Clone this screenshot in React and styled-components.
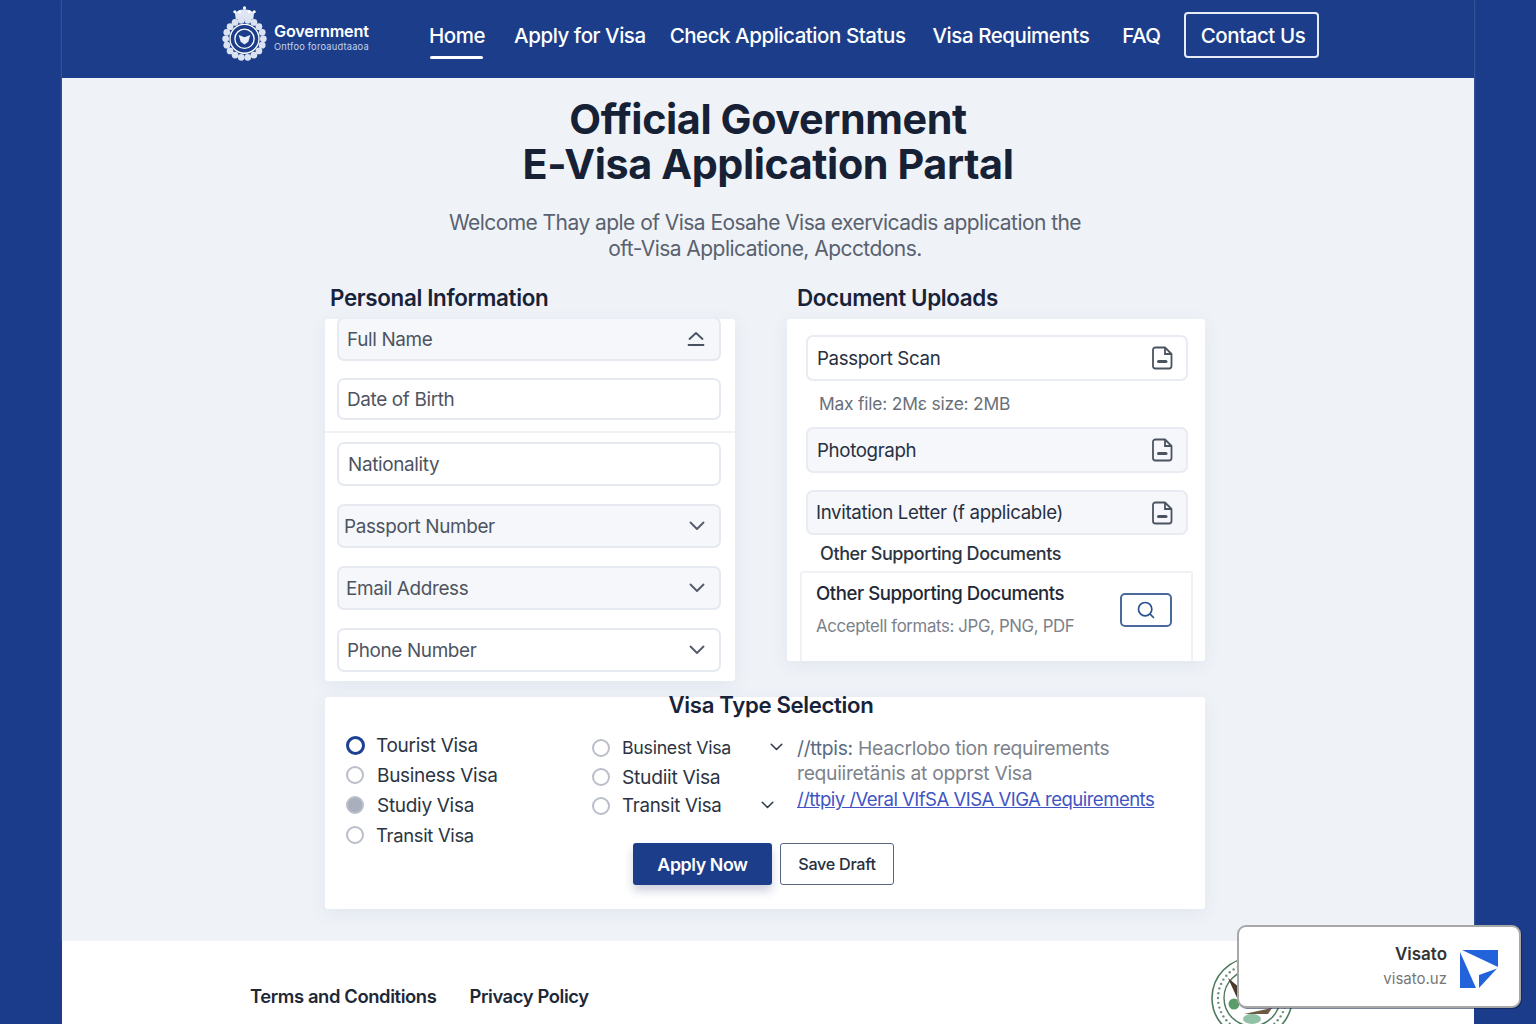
import React from "react";
import styled, { createGlobalStyle } from "styled-components";
import { Search } from "lucide-react";

const GlobalStyle = createGlobalStyle`
  html, body {
    margin: 0;
    padding: 0;
    background: #1a3c8a;
    font-family: "Inter", "Liberation Sans", sans-serif;
  }
  * {
    box-sizing: border-box;
  }
`;

const Page = styled.div`
  width: 1536px;
  height: 1024px;
  overflow: hidden;
  background: #1a3c8a;
`;

const Shell = styled.div`
  width: 1412px;
  margin-left: 62px;
  display: flex;
  flex-direction: column;
  box-shadow: 0 0 2px rgba(255, 255, 255, 0.35);
`;

const Header = styled.header`
  height: 78px;
  background: #1b3d8a;
  display: flex;
  align-items: center;
  padding: 0 0 8px 160px;
`;

const Brand = styled.div`
  width: 207px;
  margin-top: -4px;
  display: flex;
  align-items: center;
  gap: 7px;
`;

const BrandText = styled.div`
  display: flex;
  flex-direction: column;
  color: #fff;
  margin-top: 10px;
`;

const BrandName = styled.span`
  font-size: 16.2px;
  font-weight: 600;
  line-height: 18px;
  letter-spacing: -0.2px;
`;

const BrandSub = styled.span`
  font-size: 9.3px;
  line-height: 14px;
  letter-spacing: 0.2px;
  color: #c4d0e8;
  white-space: nowrap;
`;

const Nav = styled.nav`
  width: 890px;
  display: flex;
  align-items: center;
`;

const NavLink = styled.a`
  position: relative;
  margin-left: ${(p) => p.$left || 0}px;
  color: #fff;
  font-size: 20.5px;
  font-weight: 500;
  letter-spacing: -0.45px;
  white-space: nowrap;

  &::after {
    content: "";
    display: ${(p) => (p.$active ? "block" : "none")};
    position: absolute;
    left: 1px;
    right: 2px;
    bottom: -11px;
    height: 3px;
    background: #fff;
    border-radius: 2px;
  }
`;

const ContactButton = styled.a`
  height: 46px;
  width: 135px;
  margin-left: auto;
  padding-left: 3px;
  border: 2px solid #e6ebf5;
  border-radius: 4px;
  color: #fff;
  font-size: 20.5px;
  font-weight: 500;
  letter-spacing: -0.45px;
  display: flex;
  align-items: center;
  justify-content: center;
`;

const Main = styled.main`
  height: 863px;
  background: #eff3f8;
  display: flex;
  flex-direction: column;
  align-items: center;
  padding-top: 19px;
`;

const Title = styled.h1`
  margin: 0;
  font-size: 41.3px;
  line-height: 45px;
  font-weight: 700;
  letter-spacing: -0.4px;
  color: #162136;
  text-align: center;
`;

const Lead = styled.p`
  margin: 23px 6px 0 0;
  font-size: 21px;
  line-height: 26px;
  letter-spacing: -0.55px;
  color: #59616f;
  text-align: center;
`;

const Columns = styled.div`
  align-self: flex-start;
  width: 880px;
  margin: 21px 0 0 263px;
  display: grid;
  grid-template-columns: 410px 418px;
  column-gap: 52px;
  align-items: start;
`;

const Column = styled.section`
  display: flex;
  flex-direction: column;
`;

const SectionTitle = styled.h2`
  margin: 0 0 6px;
  padding-left: ${(p) => p.$indent}px;
  font-size: 22.4px;
  line-height: 30px;
  font-weight: 600;
  letter-spacing: -0.35px;
  color: #18233a;
`;

const Card = styled.div`
  background: #fff;
  border-radius: 3px;
  box-shadow: 0 4px 18px rgba(60, 80, 120, 0.08);
`;

const PersonalCard = styled(Card)`
  height: 362px;
  overflow: hidden;
`;

const FieldGroup = styled.div`
  margin-top: ${(p) => p.$pull || 0}px;
  padding: ${(p) => p.$pad};
  display: flex;
  flex-direction: column;
  gap: ${(p) => p.$gap}px;
  border-bottom: ${(p) => (p.$divided ? "2px solid #eef1f5" : "none")};
`;

const Field = styled.div`
  width: 384px;
  height: ${(p) => p.$h}px;
  margin-left: 12px;
  padding: 0 14px 0 ${(p) => p.$inset}px;
  display: flex;
  align-items: center;
  justify-content: space-between;
  background: ${(p) => (p.$filled ? "#f5f7fa" : "#fff")};
  border: 2px solid #e6eaf0;
  border-radius: 7px;
  font-size: 18.9px;
  letter-spacing: -0.35px;
  color: #4d5461;
`;

const DocCard = styled(Card)`
  height: 342px;
  padding-top: 16px;
  display: flex;
  flex-direction: column;
`;

const DocRow = styled.div`
  width: 382px;
  height: ${(p) => p.$h}px;
  margin: ${(p) => p.$top || 0}px 0 0 19px;
  padding: 0 13px 0 ${(p) => p.$inset}px;
  display: flex;
  align-items: center;
  justify-content: space-between;
  background: ${(p) => (p.$filled ? "#f5f7fa" : "#fff")};
  border: 2px solid #e8ebf1;
  border-radius: 7px;
  font-size: 18.7px;
  letter-spacing: -0.35px;
  color: #27303f;
`;

const Hint = styled.div`
  margin: 11px 0 11px 32px;
  font-size: 17.4px;
  line-height: 24px;
  letter-spacing: -0.2px;
  color: #6a7078;
`;

const SubLabel = styled.div`
  margin: 7px 0 5px 33px;
  font-size: 18px;
  line-height: 24px;
  font-weight: 500;
  letter-spacing: -0.4px;
  color: #2c3442;
`;

const SupportBox = styled.div`
  flex: 1;
  margin: 0 12px 0 13px;
  padding: 7px 19px 0 14px;
  display: flex;
  align-items: flex-start;
  justify-content: space-between;
  border: 2px solid #eff1f5;
  border-bottom: none;
  border-radius: 3px 3px 0 0;
`;

const SupportText = styled.div`
  display: flex;
  flex-direction: column;
  gap: 8px;
`;

const SupportTitle = styled.div`
  font-size: 18.6px;
  line-height: 26px;
  font-weight: 500;
  letter-spacing: -0.45px;
  color: #1f2837;
`;

const SupportHint = styled.div`
  font-size: 16.8px;
  line-height: 24px;
  letter-spacing: -0.35px;
  color: #7b818a;
`;

const SearchButton = styled.div`
  width: 52px;
  height: 34px;
  margin-top: 13px;
  border: 2px solid #4a6a9c;
  border-radius: 5px;
  color: #28528c;
  display: flex;
  align-items: center;
  justify-content: center;
`;

const VisaCard = styled(Card)`
  align-self: flex-start;
  width: 880px;
  height: 212px;
  margin: 16px 0 0 263px;
`;

const VisaTitle = styled.h2`
  margin: -4px 0 0 12px;
  text-align: center;
  font-size: 22.2px;
  line-height: 24px;
  font-weight: 600;
  letter-spacing: -0.35px;
  color: #18233a;
`;

const VisaGrid = styled.div`
  display: grid;
  grid-template-columns: 246px 205px 1fr;
  padding: 13px 0 0 21px;
`;

const RadioList = styled.div`
  display: flex;
  flex-direction: column;
  padding-top: ${(p) => p.$top}px;
`;

const RadioRow = styled.div`
  height: ${(p) => p.$h}px;
  display: flex;
  align-items: center;
  gap: ${(p) => p.$gap}px;
  font-size: ${(p) => p.$size || 19}px;
  letter-spacing: -0.3px;
  white-space: nowrap;
  color: #2c3442;
`;

const RadioDot = styled.span`
  width: ${(p) => (p.$on ? 19 : 18)}px;
  height: ${(p) => (p.$on ? 19 : 18)}px;
  flex: none;
  border-radius: 50%;
  border: ${(p) => (p.$on ? "3px solid #1c3f92" : "2px solid #b9bec8")};
  background: ${(p) => (p.$muted ? "#a9afbd" : "#fff")};
`;

const ChevronSlot = styled.span`
  display: flex;
  margin-left: 27px;
`;

const InfoBlock = styled.div`
  padding-top: 6px;
  font-size: 19.3px;
  line-height: 25px;
  letter-spacing: -0.3px;
  color: #7d838c;
`;

const InfoLead = styled.span`
  color: #5a6b84;
`;

const InfoLink = styled.a`
  display: block;
  margin-top: 1px;
  font-size: 18.6px;
  letter-spacing: -0.55px;
  color: #3f55c4;
  text-decoration: underline;
`;

const Actions = styled.div`
  display: flex;
  justify-content: center;
  gap: 8px;
  margin: -7px 0 0 -3px;
`;

const ApplyButton = styled.button`
  width: 139px;
  height: 42px;
  border: none;
  border-radius: 3px;
  background: #1b3d8a;
  color: #fff;
  font: 600 17.8px "Inter", sans-serif;
  letter-spacing: -0.4px;
  box-shadow: 0 6px 10px rgba(30, 50, 100, 0.22);
`;

const DraftButton = styled.button`
  width: 114px;
  height: 42px;
  border: 1.5px solid #56657f;
  border-radius: 3px;
  background: #fff;
  color: #27303f;
  font: 500 16.2px "Inter", sans-serif;
  letter-spacing: -0.3px;
`;

const Footer = styled.footer`
  position: absolute;
  left: 62px;
  top: 941px;
  width: 1412px;
  height: 83px;
  background: #fff;
  overflow: hidden;
  display: flex;
  padding: 43px 0 0 188px;
  gap: 33px;
`;

const FooterLink = styled.a`
  font-size: 18.4px;
  line-height: 24px;
  font-weight: 600;
  letter-spacing: -0.4px;
  color: #202838;
`;

const Seal = styled.div`
  position: absolute;
  left: 1148px;
  top: 15px;
`;

const Toast = styled.div`
  position: absolute;
  left: 1237px;
  top: 925px;
  width: 284px;
  height: 83px;
  padding-right: 21px;
  background: #fff;
  border: 2px solid #a8a8a8;
  border-radius: 9px;
  box-shadow: 1px 1px 0 rgba(15, 30, 70, 0.55);
  display: flex;
  align-items: center;
  justify-content: flex-end;
  gap: 13px;
`;

const ToastText = styled.div`
  display: flex;
  flex-direction: column;
  align-items: flex-end;
  gap: 5px;
`;

const ToastName = styled.span`
  font-size: 17px;
  line-height: 20px;
  font-weight: 600;
  color: #333;
`;

const ToastUrl = styled.span`
  font-size: 15px;
  line-height: 20px;
  color: #777;
`;

const MarkSlot = styled.span`
  display: flex;
  margin-top: 4px;
`;

function Emblem() {
  const beads = Array.from({ length: 18 }, (_, i) => (i * Math.PI * 2) / 18);
  const crown = [13, 18, 23, 28, 33];
  return (
    <svg width="45" height="56" viewBox="0 0 46 58" fill="none">
      <path d="M14 15 L13 8 Q23 1 33 8 L32 15 Z" fill="#dfe6f3" />
      {crown.map((x) => (
        <circle key={x} cx={x} cy={x === 23 ? 3 : 7} r="1.6" fill="#fff" />
      ))}
      {beads.map((a) => (
        <circle
          key={a}
          cx={23 + 19.5 * Math.cos(a)}
          cy={35 + 19.5 * Math.sin(a)}
          r="3.5"
          fill="#dbe3f1"
        />
      ))}
      <circle cx="23" cy="35" r="15" fill="#1b3d8a" stroke="#fff" strokeWidth="1.4" />
      <circle cx="23" cy="35" r="10" stroke="#fff" strokeWidth="1.4" />
      <path d="M17 31 L23 33.5 L29 31 L27 38 L23 41 L19 38 Z" fill="#e8edf6" />
    </svg>
  );
}

function DocIcon() {
  return (
    <svg width="21" height="24" viewBox="0 0 21 24" fill="none" stroke="#4b5361" strokeWidth="1.8">
      <path d="M3.5 1.5 H13 L19.5 8 V20 a2.5 2.5 0 0 1 -2.5 2.5 H3.5 A2.5 2.5 0 0 1 1 20 V4 A2.5 2.5 0 0 1 3.5 1.5 Z" strokeLinejoin="round" />
      <path d="M13 2 V8 H19" />
      <path d="M6.5 15.5 H14" strokeWidth="3" strokeLinecap="round" />
    </svg>
  );
}

function UpIcon() {
  return (
    <svg width="18" height="16" viewBox="0 0 18 16" fill="none" stroke="#4a5260" strokeWidth="1.8" strokeLinecap="round" strokeLinejoin="round">
      <path d="M2.5 8 L9 2 L15.5 8" />
      <path d="M1.5 14 H16.5" />
    </svg>
  );
}

function Chevron({ width = 16, color = "#555c69" }) {
  return (
    <svg width={width} height={width * 0.625} viewBox="0 0 16 10" fill="none" stroke={color} strokeWidth="1.9" strokeLinecap="round" strokeLinejoin="round">
      <path d="M1.5 1.5 L8 8 L14.5 1.5" />
    </svg>
  );
}

function FooterSeal() {
  const ticks = Array.from({ length: 44 }, (_, i) => (i * Math.PI * 2) / 44);
  return (
    <svg width="84" height="84" viewBox="0 0 84 84" fill="none">
      <circle cx="42" cy="42" r="40" fill="#fff" stroke="#4d7a5c" strokeWidth="1.6" />
      <circle cx="42" cy="42" r="28" stroke="#4d7a5c" strokeWidth="1.4" />
      {ticks.map((a) => (
        <circle key={a} cx={42 + 34 * Math.cos(a)} cy={42 + 34 * Math.sin(a)} r="1.2" fill="#6b8f78" />
      ))}
      <path d="M18 22 L30 32 L36 46 L28 44 Z" fill="#4a3a2c" />
      <circle cx="24" cy="48" r="5.5" fill="#5c9c6a" />
      <path d="M34 58 L62 52 L58 58 Z" fill="#6d5a45" />
      <ellipse cx="42" cy="63" rx="9" ry="5" fill="#8fc2a6" />
    </svg>
  );
}

function VisatoMark() {
  return (
    <svg width="38" height="38" viewBox="0 0 38 38" fill="#2263dc">
      <path d="M2 0 H38 V17 Z" />
      <path d="M0 2 V38 H16 Z" />
      <path d="M19 25 L37 18.5 L19 38 Z" />
    </svg>
  );
}

export default function App() {
  return (
    <Page>
      <GlobalStyle />
      <Shell>
        <Header>
          <Brand>
            <Emblem />
            <BrandText>
              <BrandName>Government</BrandName>
              <BrandSub>Ontfoo foroaudtaaoa</BrandSub>
            </BrandText>
          </Brand>
          <Nav>
            <NavLink $active>Home</NavLink>
            <NavLink $left={29}>Apply for Visa</NavLink>
            <NavLink $left={24}>Check Application Status</NavLink>
            <NavLink $left={27}>Visa Requiments</NavLink>
            <NavLink $left={33}>FAQ</NavLink>
            <ContactButton>Contact Us</ContactButton>
          </Nav>
        </Header>
        <Main>
          <Title>
            Official Government
            <br />
            E-Visa Application Partal
          </Title>
          <Lead>
            Welcome Thay aple of Visa Eosahe Visa exervicadis application the
            <br />
            oft-Visa Applicatione, Apcctdons.
          </Lead>
          <Columns>
            <Column>
              <SectionTitle $indent={5}>Personal Information</SectionTitle>
              <PersonalCard>
                <FieldGroup $pull={-2} $pad="0 0 11px" $gap={17} $divided>
                  <Field $h={44} $filled $inset={8}>
                    Full Name
                    <UpIcon />
                  </Field>
                  <Field $h={42} $inset={8}>Date of Birth</Field>
                </FieldGroup>
                <FieldGroup $pad="9px 0 0" $gap={18}>
                  <Field $h={44} $inset={9}>Nationality</Field>
                  <Field $h={44} $filled $inset={5}>
                    Passport Number
                    <Chevron />
                  </Field>
                  <Field $h={44} $filled $inset={7}>
                    Email Address
                    <Chevron />
                  </Field>
                  <Field $h={44} $inset={8}>
                    Phone Number
                    <Chevron />
                  </Field>
                </FieldGroup>
              </PersonalCard>
            </Column>
            <Column>
              <SectionTitle $indent={10}>Document Uploads</SectionTitle>
              <DocCard>
                <DocRow $h={46} $inset={9}>
                  Passport Scan
                  <DocIcon />
                </DocRow>
                <Hint>Max file: 2Mε size: 2MB</Hint>
                <DocRow $h={46} $filled $inset={9}>
                  Photograph
                  <DocIcon />
                </DocRow>
                <DocRow $h={45} $filled $top={17} $inset={8}>
                  Invitation Letter (f applicable)
                  <DocIcon />
                </DocRow>
                <SubLabel>Other Supporting Documents</SubLabel>
                <SupportBox>
                  <SupportText>
                    <SupportTitle>Other Supporting Documents</SupportTitle>
                    <SupportHint>Acceptell formats: JPG, PNG, PDF</SupportHint>
                  </SupportText>
                  <SearchButton>
                    <Search size={20} strokeWidth={2} />
                  </SearchButton>
                </SupportBox>
              </DocCard>
            </Column>
          </Columns>
          <VisaCard>
            <VisaTitle>Visa Type Selection</VisaTitle>
            <VisaGrid>
              <RadioList $top={0}>
                <RadioRow $h={30} $gap={11}>
                  <RadioDot $on />
                  Tourist Visa
                </RadioRow>
                <RadioRow $h={30} $gap={13}>
                  <RadioDot />
                  Business Visa
                </RadioRow>
                <RadioRow $h={30} $gap={13}>
                  <RadioDot $muted />
                  Studiy Visa
                </RadioRow>
                <RadioRow $h={30} $gap={12} $size={18.4}>
                  <RadioDot />
                  Transit Visa
                </RadioRow>
              </RadioList>
              <RadioList $top={3}>
                <RadioRow $h={29} $gap={12} $size={17.8}>
                  <RadioDot />
                  Businest Visa
                  <ChevronSlot>
                    <Chevron width={13} color="#30394a" />
                  </ChevronSlot>
                </RadioRow>
                <RadioRow $h={29} $gap={12} $size={19.3}>
                  <RadioDot />
                  Studiit Visa
                </RadioRow>
                <RadioRow $h={29} $gap={12} $size={18.7}>
                  <RadioDot />
                  Transit Visa
                  <ChevronSlot>
                    <Chevron width={13} color="#30394a" />
                  </ChevronSlot>
                </RadioRow>
              </RadioList>
              <InfoBlock>
                <InfoLead>//ttpis:</InfoLead> Heacrlobo tion requirements
                <br />
                requiiretänis at opprst Visa
                <InfoLink>//ttpiy /Veral VIfSA VISA VIGA requirements</InfoLink>
              </InfoBlock>
            </VisaGrid>
            <Actions>
              <ApplyButton>Apply Now</ApplyButton>
              <DraftButton>Save Draft</DraftButton>
            </Actions>
          </VisaCard>
        </Main>
      </Shell>
      <Footer>
        <FooterLink>Terms and Conditions</FooterLink>
        <FooterLink>Privacy Policy</FooterLink>
        <Seal>
          <FooterSeal />
        </Seal>
      </Footer>
      <Toast>
        <ToastText>
          <ToastName>Visato</ToastName>
          <ToastUrl>visato.uz</ToastUrl>
        </ToastText>
        <MarkSlot>
          <VisatoMark />
        </MarkSlot>
      </Toast>
    </Page>
  );
}
